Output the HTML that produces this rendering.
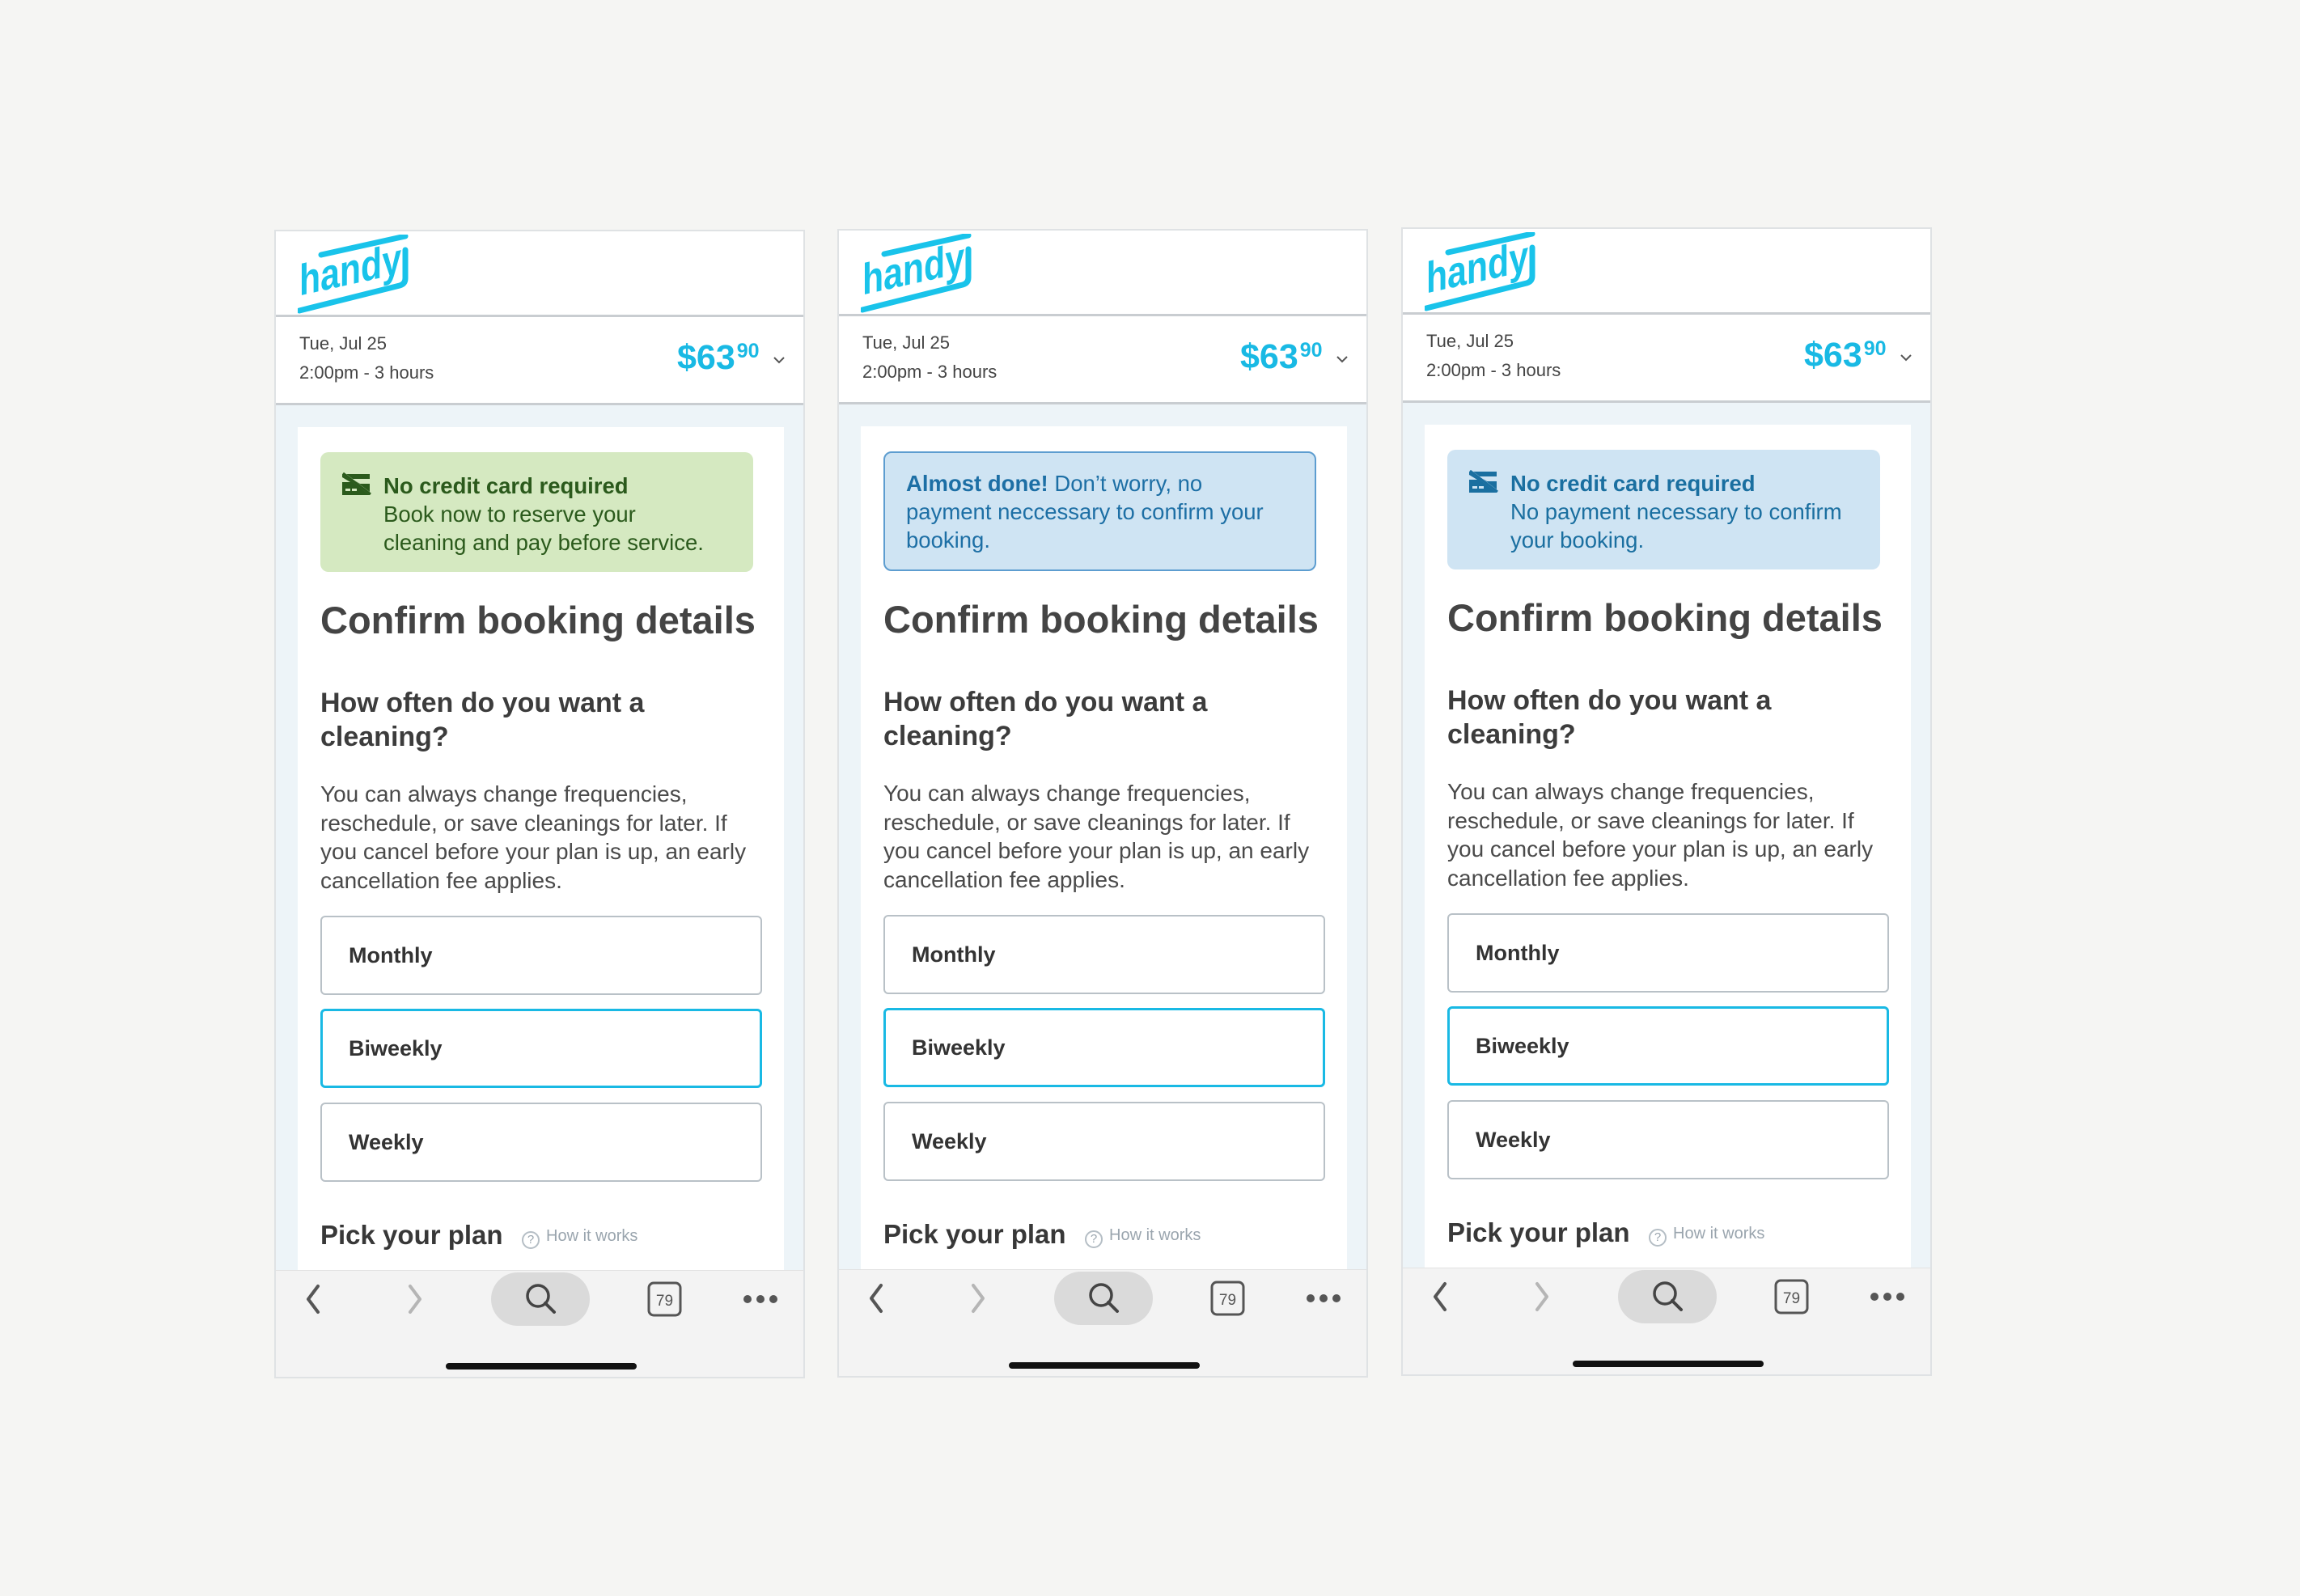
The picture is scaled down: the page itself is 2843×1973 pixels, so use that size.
<!DOCTYPE html>
<html><head><meta charset="utf-8"><style>
*{box-sizing:border-box;margin:0;padding:0}
body{width:2843px;height:1973px;background:#f5f5f3;position:relative;overflow:hidden;font-family:"Liberation Sans",sans-serif}
.ph{position:absolute;width:656px;height:1420px;background:#fff;border:2px solid #dfe2e4;overflow:hidden}
.ph>*{position:absolute}
.hdr{left:0;top:0;width:100%;height:106px;border-bottom:3px solid #c9cdd1;background:#fff}
.info{left:0;top:106px;width:100%;height:109px;border-bottom:3px solid #c9cdd1;background:#fff}
.d{position:absolute;left:29px;font-size:22px;color:#444;white-space:nowrap}
.price{position:absolute;left:496px;top:26px;color:#19b9e4;font-weight:bold;font-size:43px;white-space:nowrap}
.price sup{font-size:25px;position:relative;top:-6px;vertical-align:top;line-height:44px;margin-left:2px}
.chev{position:absolute;left:614px;top:48px}
.bgb{left:0;top:215px;width:100%;height:1070px;background:#edf4f8}
.card{left:27px;top:242px;width:601px;height:1043px;background:#fff}
.ban{left:55px;top:273px;width:535px;height:148px;border-radius:10px;font-size:27.5px;line-height:35px;white-space:nowrap}
.t{white-space:nowrap;color:#3a3a3a}
.h1{left:55px;top:451px;font-size:47px;line-height:60px;font-weight:bold;color:#444}
.h2{left:55px;top:562px;font-size:34px;line-height:42px;font-weight:bold;color:#3c3c3c}
.body{left:55px;top:678px;font-size:28px;line-height:35.5px;color:#4a4a4a}
.opt{left:55px;width:546px;height:98px;border:2px solid #b9c1c7;border-radius:6px;font-weight:bold;font-size:27px;color:#333;padding-left:33px;line-height:94px}
.opt.sel{border:3px solid #19b9e4;line-height:92px;padding-left:32px}
.pick{left:55px;top:1222px;font-size:33px;font-weight:bold;color:#383838;white-space:nowrap}
.how{left:304px;top:1231px;font-size:20px;color:#9aa5ae;white-space:nowrap}
.tb{left:0;top:1284px;width:100%;height:140px;background:#f3f3f3;border-top:1px solid #e2e2e2}
.home{left:210px;top:1399px;width:236px;height:8px;border-radius:4px;background:#111}
</style></head><body>

<div class="ph" style="left:339px;top:284px">
 <div class="hdr"><svg style="position:absolute;left:27px;top:4px" width="138" height="100" viewBox="0 0 138 100"><g fill="none" stroke="#19c3ea" stroke-width="7" stroke-linecap="round" stroke-linejoin="round"><path d="M29 25 L133 2"/><path d="M2 94 L126 63 Q133 61 133 54 L133 19"/></g><g transform="skewY(-12.5)"><text x="2" y="76" font-family="Liberation Sans" font-weight="bold" font-size="54" fill="#19c3ea" textLength="126" lengthAdjust="spacingAndGlyphs">handy</text></g></svg></div>
 <div class="info"><div class="d" style="top:20px">Tue, Jul 25</div><div class="d" style="top:56px">2:00pm - 3 hours</div><div class="price">$63<sup>90</sup></div><svg class="chev" width="16" height="10"><path d="M2 2 L8 8 L14 2" fill="none" stroke="#555" stroke-width="2"/></svg></div>
 <div class="bgb"></div><div class="card"></div>
 <div class="ban" style="background:#d5e9c1;color:#2b5a1c">
  <svg style="position:absolute;left:25px;top:25px" width="38" height="28" viewBox="0 0 38 28"><path d="M2 2 L36 2 L36 8 L14 8 L24 14 L36 14 L36 28 L2 28 L2 12 L12 12 L2 6Z" fill="#2b5a1c"/><path d="M2 0 L36 26" stroke="#d5e9c1" stroke-width="3"/><path d="M3 1 L37 27" stroke="#2b5a1c" stroke-width="3"/><rect x="6" y="20" width="6" height="3" fill="#d5e9c1"/><rect x="14" y="20" width="6" height="3" fill="#d5e9c1"/></svg>
  <div style="position:absolute;left:78px;top:24px"><b>No credit card required</b><br>Book now to reserve your<br>cleaning and pay before service.</div></div>
 <div class="t h1">Confirm booking details</div>
 <div class="t h2">How often do you want a<br>cleaning?</div>
 <div class="t body">You can always change frequencies,<br>reschedule, or save cleanings for later. If<br>you cancel before your plan is up, an early<br>cancellation fee applies.</div>
 <div class="opt" style="top:846px">Monthly</div>
 <div class="opt sel" style="top:961px">Biweekly</div>
 <div class="opt" style="top:1077px">Weekly</div>
 <div class="pick">Pick your plan</div>
 <div class="how"><span style="display:inline-block;width:22px;height:22px;border:2px solid #b5bec5;border-radius:50%;font-size:15px;text-align:center;line-height:18px;vertical-align:-3px;margin-right:8px">?</span>How it works</div>
 <div class="tb"><svg width="656" height="80" style="position:absolute;left:0;top:0"><path d="M52 19 L40 35 L52 51" fill="none" stroke="#555" stroke-width="4" stroke-linecap="round" stroke-linejoin="round"/><path d="M166 19 L178 35 L166 51" fill="none" stroke="#b5b5b5" stroke-width="4" stroke-linecap="round" stroke-linejoin="round"/><rect x="266" y="2" width="122" height="66" rx="33" fill="#dadada"/><circle cx="324" cy="31" r="13" fill="none" stroke="#444" stroke-width="3.5"/><path d="M333 40 L344 51" stroke="#444" stroke-width="4" stroke-linecap="round"/><rect x="461" y="15" width="39" height="40" rx="6" fill="none" stroke="#555" stroke-width="3"/><text x="480.5" y="43" font-size="19" font-family="Liberation Sans" text-anchor="middle" fill="#555">79</text><circle cx="583" cy="35" r="5" fill="#555"/><circle cx="599" cy="35" r="5" fill="#555"/><circle cx="615" cy="35" r="5" fill="#555"/></svg></div>
 <div class="home"></div>
</div>

<div class="ph" style="left:1035px;top:283px">
 <div class="hdr"><svg style="position:absolute;left:27px;top:4px" width="138" height="100" viewBox="0 0 138 100"><g fill="none" stroke="#19c3ea" stroke-width="7" stroke-linecap="round" stroke-linejoin="round"><path d="M29 25 L133 2"/><path d="M2 94 L126 63 Q133 61 133 54 L133 19"/></g><g transform="skewY(-12.5)"><text x="2" y="76" font-family="Liberation Sans" font-weight="bold" font-size="54" fill="#19c3ea" textLength="126" lengthAdjust="spacingAndGlyphs">handy</text></g></svg></div>
 <div class="info"><div class="d" style="top:20px">Tue, Jul 25</div><div class="d" style="top:56px">2:00pm - 3 hours</div><div class="price">$63<sup>90</sup></div><svg class="chev" width="16" height="10"><path d="M2 2 L8 8 L14 2" fill="none" stroke="#555" stroke-width="2"/></svg></div>
 <div class="bgb"></div><div class="card"></div>
 <div class="ban" style="background:#cfe4f3;color:#1d6fa5;border:2px solid #5d9dd0">
  <div style="position:absolute;left:26px;top:20px"><b>Almost done!</b> Don’t worry, no<br>payment neccessary to confirm your<br>booking.</div></div>
 <div class="t h1">Confirm booking details</div>
 <div class="t h2">How often do you want a<br>cleaning?</div>
 <div class="t body">You can always change frequencies,<br>reschedule, or save cleanings for later. If<br>you cancel before your plan is up, an early<br>cancellation fee applies.</div>
 <div class="opt" style="top:846px">Monthly</div>
 <div class="opt sel" style="top:961px">Biweekly</div>
 <div class="opt" style="top:1077px">Weekly</div>
 <div class="pick">Pick your plan</div>
 <div class="how"><span style="display:inline-block;width:22px;height:22px;border:2px solid #b5bec5;border-radius:50%;font-size:15px;text-align:center;line-height:18px;vertical-align:-3px;margin-right:8px">?</span>How it works</div>
 <div class="tb"><svg width="656" height="80" style="position:absolute;left:0;top:0"><path d="M52 19 L40 35 L52 51" fill="none" stroke="#555" stroke-width="4" stroke-linecap="round" stroke-linejoin="round"/><path d="M166 19 L178 35 L166 51" fill="none" stroke="#b5b5b5" stroke-width="4" stroke-linecap="round" stroke-linejoin="round"/><rect x="266" y="2" width="122" height="66" rx="33" fill="#dadada"/><circle cx="324" cy="31" r="13" fill="none" stroke="#444" stroke-width="3.5"/><path d="M333 40 L344 51" stroke="#444" stroke-width="4" stroke-linecap="round"/><rect x="461" y="15" width="39" height="40" rx="6" fill="none" stroke="#555" stroke-width="3"/><text x="480.5" y="43" font-size="19" font-family="Liberation Sans" text-anchor="middle" fill="#555">79</text><circle cx="583" cy="35" r="5" fill="#555"/><circle cx="599" cy="35" r="5" fill="#555"/><circle cx="615" cy="35" r="5" fill="#555"/></svg></div>
 <div class="home"></div>
</div>

<div class="ph" style="left:1732px;top:281px">
 <div class="hdr"><svg style="position:absolute;left:27px;top:4px" width="138" height="100" viewBox="0 0 138 100"><g fill="none" stroke="#19c3ea" stroke-width="7" stroke-linecap="round" stroke-linejoin="round"><path d="M29 25 L133 2"/><path d="M2 94 L126 63 Q133 61 133 54 L133 19"/></g><g transform="skewY(-12.5)"><text x="2" y="76" font-family="Liberation Sans" font-weight="bold" font-size="54" fill="#19c3ea" textLength="126" lengthAdjust="spacingAndGlyphs">handy</text></g></svg></div>
 <div class="info"><div class="d" style="top:20px">Tue, Jul 25</div><div class="d" style="top:56px">2:00pm - 3 hours</div><div class="price">$63<sup>90</sup></div><svg class="chev" width="16" height="10"><path d="M2 2 L8 8 L14 2" fill="none" stroke="#555" stroke-width="2"/></svg></div>
 <div class="bgb"></div><div class="card"></div>
 <div class="ban" style="background:#cfe4f3;color:#1a6fa0">
  <svg style="position:absolute;left:25px;top:25px" width="38" height="28" viewBox="0 0 38 28"><path d="M2 2 L36 2 L36 8 L14 8 L24 14 L36 14 L36 28 L2 28 L2 12 L12 12 L2 6Z" fill="#1a6fa0"/><path d="M2 0 L36 26" stroke="#cfe4f3" stroke-width="3"/><path d="M3 1 L37 27" stroke="#1a6fa0" stroke-width="3"/><rect x="6" y="20" width="6" height="3" fill="#cfe4f3"/><rect x="14" y="20" width="6" height="3" fill="#cfe4f3"/></svg>
  <div style="position:absolute;left:78px;top:24px"><b>No credit card required</b><br>No payment necessary to confirm<br>your booking.</div></div>
 <div class="t h1">Confirm booking details</div>
 <div class="t h2">How often do you want a<br>cleaning?</div>
 <div class="t body">You can always change frequencies,<br>reschedule, or save cleanings for later. If<br>you cancel before your plan is up, an early<br>cancellation fee applies.</div>
 <div class="opt" style="top:846px">Monthly</div>
 <div class="opt sel" style="top:961px">Biweekly</div>
 <div class="opt" style="top:1077px">Weekly</div>
 <div class="pick">Pick your plan</div>
 <div class="how"><span style="display:inline-block;width:22px;height:22px;border:2px solid #b5bec5;border-radius:50%;font-size:15px;text-align:center;line-height:18px;vertical-align:-3px;margin-right:8px">?</span>How it works</div>
 <div class="tb"><svg width="656" height="80" style="position:absolute;left:0;top:0"><path d="M52 19 L40 35 L52 51" fill="none" stroke="#555" stroke-width="4" stroke-linecap="round" stroke-linejoin="round"/><path d="M166 19 L178 35 L166 51" fill="none" stroke="#b5b5b5" stroke-width="4" stroke-linecap="round" stroke-linejoin="round"/><rect x="266" y="2" width="122" height="66" rx="33" fill="#dadada"/><circle cx="324" cy="31" r="13" fill="none" stroke="#444" stroke-width="3.5"/><path d="M333 40 L344 51" stroke="#444" stroke-width="4" stroke-linecap="round"/><rect x="461" y="15" width="39" height="40" rx="6" fill="none" stroke="#555" stroke-width="3"/><text x="480.5" y="43" font-size="19" font-family="Liberation Sans" text-anchor="middle" fill="#555">79</text><circle cx="583" cy="35" r="5" fill="#555"/><circle cx="599" cy="35" r="5" fill="#555"/><circle cx="615" cy="35" r="5" fill="#555"/></svg></div>
 <div class="home"></div>
</div>
</body></html>
